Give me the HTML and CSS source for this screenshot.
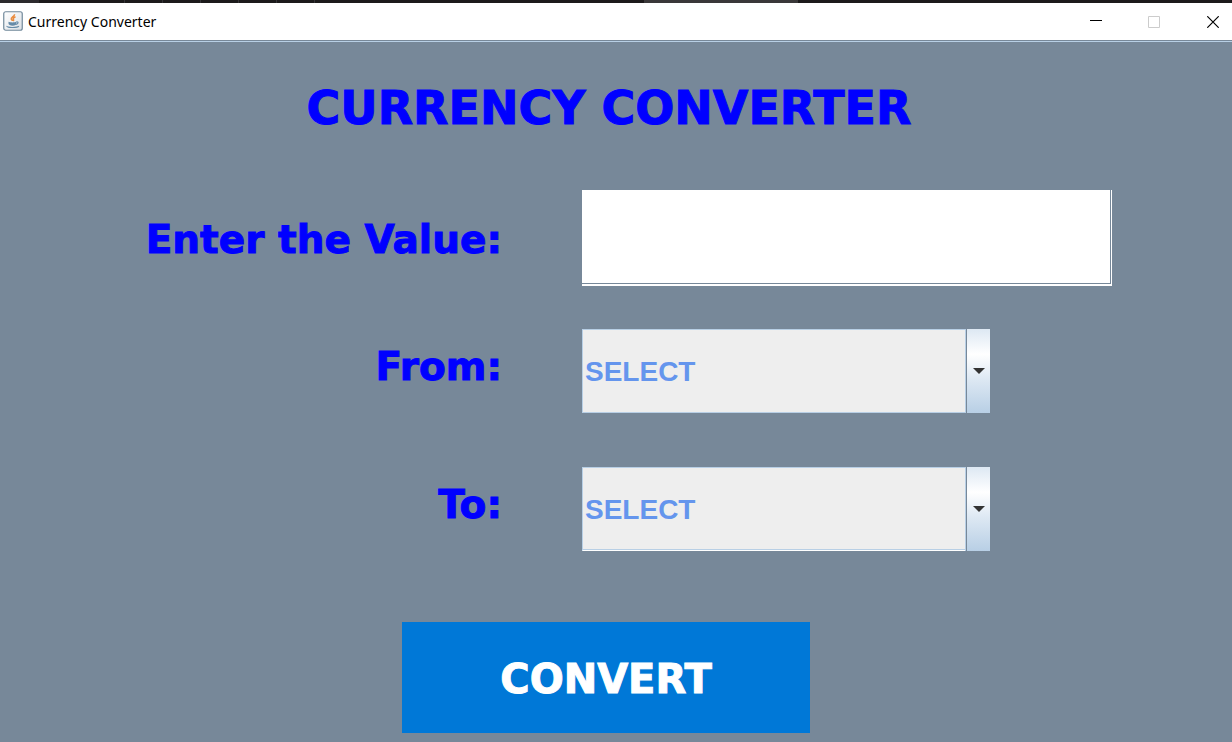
FILE: index.html
```html
<!DOCTYPE html>
<html lang="en">
<head>
<meta charset="utf-8">
<title>Currency Converter</title>
<link rel="stylesheet" href="styles.css">
</head>
<body>
<div class="backdrop"><span class="backdrop-start"></span><span class="backdrop-tabs"></span><span class="backdrop-active"></span></div>
<header class="titlebar">
  <svg class="app-icon" width="20" height="20" viewBox="0 0 20 20" aria-hidden="true">
    <defs><linearGradient id="tile" x1="0" y1="0" x2="1" y2="1"><stop offset="0" stop-color="#fff"/><stop offset="1" stop-color="#dbe0e5"/></linearGradient></defs>
    <rect x=".75" y=".75" width="18.5" height="18.5" rx="2" fill="url(#tile)" stroke="#71899b" stroke-width="1.2"/>
    <path d="M11.5 3.300c.5 2-3.700 2.800-3.200 4.800.2.800 1.200 1.200 1.200 2M12.500 5.800c-1.600.7-2.700 1.500-2.100 2.600.4.700.4 1-.2 1.700" fill="none" stroke="#e98b3e" stroke-width="1.600"/>
    <path d="M5.500 10.800c1.500.8 6.300.8 7.900 0v1.800c0 1.400-1.300 2.100-3.800 2.100s-3.800-.7-4.100-2.100z" fill="#668ba8"/>
    <path d="M13.300 11c2.500-.5 2.200 2-.5 2.500M4 15c-.8 1.900 10.400 2 11.800.1" fill="none" stroke="#668ba8" stroke-width="1.200"/>
  </svg>
  <span class="caption">Currency Converter</span>
  <div class="window-buttons">
    <button type="button" aria-label="Minimize"><svg width="12" height="12" viewBox="0 0 12 12"><path d="M0 4.500h12" stroke="#000"/></svg></button>
    <button type="button" aria-label="Maximize" disabled><svg width="12" height="12" viewBox="0 0 12 12"><path d="M.5.500h11v11H.5z" fill="none" stroke="#ccc"/></svg></button>
    <button type="button" aria-label="Close"><svg width="12" height="12" viewBox="0 0 12 12"><path d="M.3.300l11.400 11.400M11.700.300L.3 11.700" stroke="#000" stroke-width="1.200"/></svg></button>
  </div>
</header>
<main class="content">
  <h1 class="title">CURRENCY CONVERTER</h1>
  <form class="form">
    <div class="row">
      <label class="label" for="amount">Enter the Value:</label>
      <input class="amount" id="amount" type="text">
    </div>
    <div class="row">
      <label class="label" for="from">From:</label>
      <div class="combo">
        <select class="select" id="from"><option>SELECT</option></select>
        <span class="arrow"><svg width="12" height="6" viewBox="0 0 12 6"><path d="M0 0h12L6 6z" fill="#333"/></svg></span>
      </div>
    </div>
    <div class="row">
      <label class="label" for="to">To:</label>
      <div class="combo">
        <select class="select select-raised" id="to"><option>SELECT</option></select>
        <span class="arrow"><svg width="12" height="6" viewBox="0 0 12 6"><path d="M0 0h12L6 6z" fill="#333"/></svg></span>
      </div>
    </div>
    <button class="convert" type="button">CONVERT</button>
  </form>
</main>
</body>
</html>
```
FILE: styles.css
```css
* { box-sizing: border-box; }
body {
  margin: 0;
  min-height: 100vh;
  display: flex;
  flex-direction: column;
  background: #778899;
  font-family: "Arial Black", "DejaVu Sans", sans-serif;
}
.backdrop { display: flex; height: 3px; background: #1c1a1b; }
.backdrop-start { width: 39px; margin-right: 48px; background: #2c2a2d; }
.backdrop-tabs {
  width: 232px;
  margin-right: 325px;
  background: repeating-linear-gradient(90deg, transparent 0 37px, #353336 37px 38px);
}
.backdrop-active { width: 154px; background: #3a3839; }
.titlebar {
  display: flex;
  align-items: center;
  height: 37px;
  padding-left: 3px;
  background: #fff;
}
.caption {
  margin-left: 5px;
  font: 14px/20px "Noto Sans", sans-serif;
  color: #000;
}
.app-icon { margin-bottom: 2px; }
.window-buttons { display: flex; margin-left: auto; }
.window-buttons button {
  display: flex;
  align-items: center;
  justify-content: center;
  width: 58px;
  height: 34px;
  padding: 0;
  border: 0;
  background: none;
}
.window-buttons button:last-child { width: 38px; margin-left: 11px; }
.content {
  flex: 1;
  border-top: 1px solid #778899;
  box-shadow: inset 0 1px #b8cfe5;
  padding: 37px 0 8px;
}
.title {
  margin: 0;
  padding-right: 14px;
  font-size: 46px;
  line-height: 60px;
  font-weight: 900;
  text-align: center;
  color: #00f;
  -webkit-text-stroke: 1px #00f;
}
.form { display: flex; flex-direction: column; padding-top: 52px; }
.row {
  display: grid;
  grid-template-columns: 502fr 650fr;
  column-gap: 80px;
  align-items: center;
  margin-bottom: 54px;
}
.row:first-child { margin-bottom: 43px; }
.label {
  padding-bottom: 8px;
  font-size: 39px;
  line-height: 48px;
  font-weight: 900;
  text-align: right;
  color: #00f;
  -webkit-text-stroke: 1px #00f;
}
.row:first-child .label { padding: 4px 0 0; }
.amount {
  width: 100%;
  max-width: 530px;
  height: 96px;
  padding: 0 8px;
  border: solid #fff;
  border-width: 0 1px 2px 0;
  background: #fff;
  box-shadow: inset -1px -1px #778899;
  font: 700 28px "Liberation Sans", sans-serif;
}
.combo { position: relative; width: 100%; max-width: 408px; height: 84px; }
.select {
  appearance: none;
  width: 100%;
  height: 100%;
  padding: 0 28px 0 2px;
  border: 1px solid #b8cfe5;
  border-radius: 0;
  background: #eee;
  font: 700 28px "Arial Rounded MT Bold", "Liberation Sans", sans-serif;
  color: #6495ed;
}
.select-raised {
  border-bottom-color: #fff;
  box-shadow: inset 0 -1px #b8cfe5;
}
.arrow {
  position: absolute;
  top: 0;
  right: 0;
  bottom: 0;
  display: flex;
  align-items: center;
  justify-content: center;
  width: 25px;
  padding-left: 1px;
  border-left: 1px solid #b8cfe5;
  box-shadow: inset 1px 0 #778899;
  background: linear-gradient(#dde8f3, #fff 30%, #dde8f3 60%, #b8cfe5);
  pointer-events: none;
}
.convert {
  align-self: center;
  width: 408px;
  max-width: 100%;
  height: 111px;
  margin: 17px 20px 0 0;
  padding: 2px 0 0;
  border: 0;
  background: #0078d7;
  font: 900 40px "Arial Black", "DejaVu Sans", sans-serif;
  color: #fff;
  -webkit-text-stroke: 1px #fff;
}
```
